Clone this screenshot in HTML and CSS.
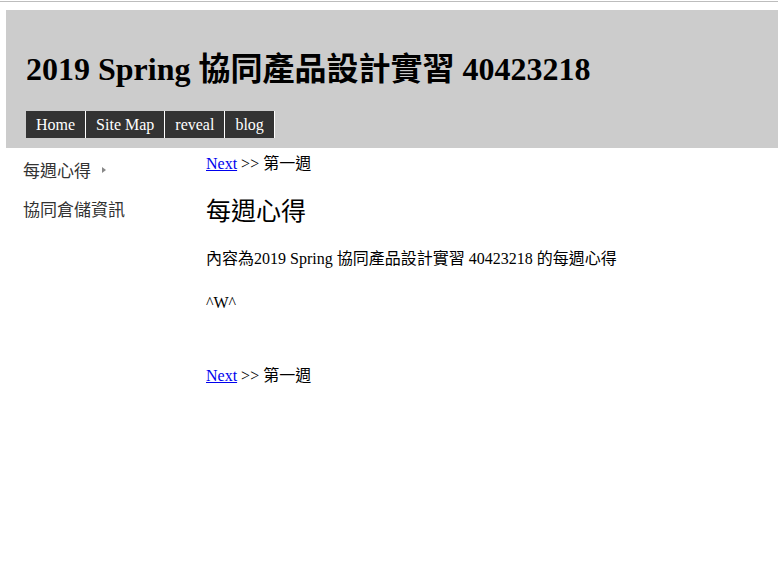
FILE: index.html
```html
<!DOCTYPE html>
<html lang="zh-Hant">
<head>
<meta charset="utf-8">
<title>2019 Spring 協同產品設計實習 40423218</title>
<link rel="stylesheet" href="styles.css">
</head>
<body>
<div class="topline"></div>
<header class="header">
  <h1 class="title">2019 Spring 協同產品設計實習 40423218</h1>
  <nav class="nav">
    <a class="nav-item" href="#">Home</a>
    <a class="nav-item" href="#">Site Map</a>
    <a class="nav-item" href="#">reveal</a>
    <a class="nav-item" href="#">blog</a>
  </nav>
</header>
<div class="layout">
  <aside class="sidebar">
    <div class="side-item">每週心得<span class="tri"></span></div>
    <div class="side-item">協同倉儲資訊</div>
  </aside>
  <main class="main">
    <div class="pager"><a class="link" href="#">Next</a> &gt;&gt; 第一週</div>
    <h2 class="heading">每週心得</h2>
    <p class="para">內容為2019 Spring 協同產品設計實習 40423218 的每週心得</p>
    <p class="para">^W^</p>
    <div class="pager bottom"><a class="link" href="#">Next</a> &gt;&gt; 第一週</div>
  </main>
</div>
</body>
</html>
```
FILE: styles.css
```css
html, body {
  margin: 0;
  padding: 0;
  background: #fff;
}
body {
  font-family: "Liberation Serif", "Noto Sans CJK TC", serif;
  font-size: 16px;
  color: #000;
  overflow: hidden;
}
.topline {
  margin-top: 1px;
  height: 1px;
  background: #bdbdbd;
}
.header {
  margin: 8px 0 0 6px;
  height: 138px;
  background: #ccc;
  box-sizing: border-box;
  padding: 0 0 0 20px;
  display: flex;
  flex-direction: column;
}
.title {
  margin: 0;
  padding-top: 40px;
  height: 61px;
  font-size: 32px;
  line-height: 38px;
  font-weight: bold;
  font-family: "Liberation Serif", "Noto Sans CJK TC", serif;
  white-space: nowrap;
}
.nav {
  display: flex;
}
.nav-item {
  display: block;
  background: #333;
  color: #fff;
  text-decoration: none;
  padding: 0 10px;
  height: 27px;
  line-height: 27px;
  font-size: 16px;
  border-right: 1px solid #fff;
}
.layout {
  display: grid;
  grid-template-columns: 206px 1fr;
}
.sidebar {
  padding: 10px 0 0 23px;
  font-family: "Noto Sans CJK TC", sans-serif;
  color: #333;
}
.side-item {
  height: 39px;
  line-height: 24px;
  font-size: 17px;
  display: flex;
  align-items: flex-start;
}
.tri {
  display: inline-block;
  width: 0;
  height: 0;
  margin: 9px 0 0 11px;
  border-left: 4px solid #888;
  border-top: 3px solid transparent;
  border-bottom: 3px solid transparent;
}
.main {
  padding-top: 7px;
}
.pager {
  line-height: 18px;
  height: 18px;
}
.link {
  color: #0000ee;
  text-decoration: underline;
}
.heading {
  margin: 25px 0 0 0;
  font-size: 25px;
  line-height: 28px;
  font-weight: normal;
  font-family: "Liberation Serif", "Noto Sans CJK TC", serif;
}
.para {
  margin: 22px 0 0 0;
  line-height: 22px;
}
.para + .para {
  margin-top: 22px;
}
.bottom {
  margin-top: 53px;
}
```
